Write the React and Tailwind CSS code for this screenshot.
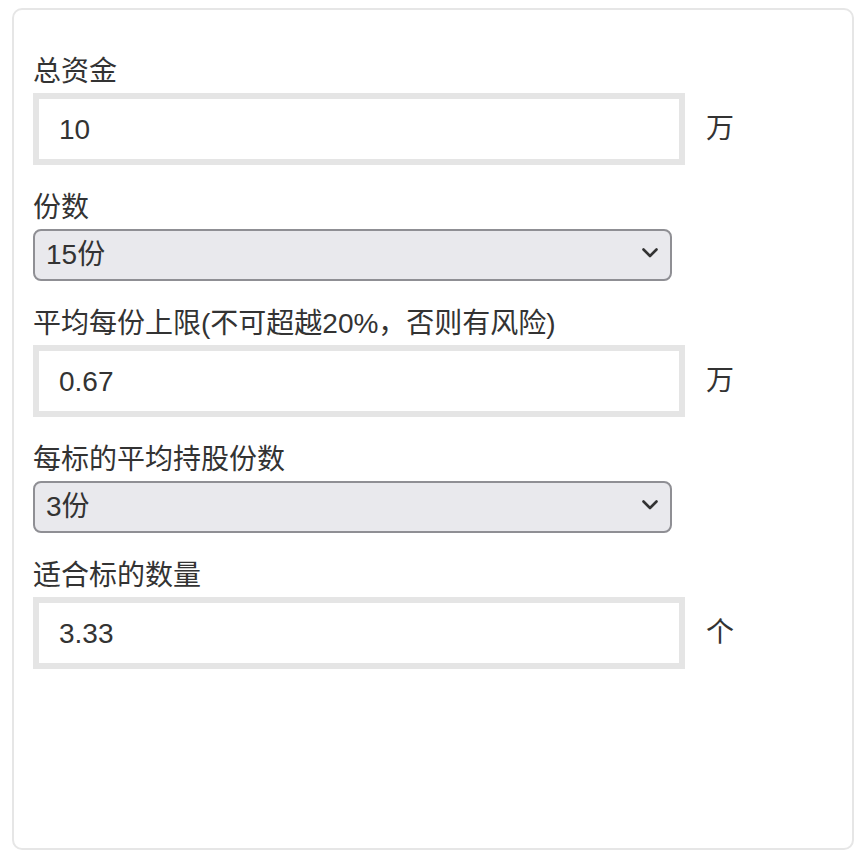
import React, { useState } from 'react'

const font = { fontFamily: '"Liberation Sans", "Noto Sans CJK SC", sans-serif' }

function Label({ children }) {
  return <div className="h-[40px] leading-[44px] text-[28px] text-[#333] mb-[3px] whitespace-nowrap">{children}</div>
}

function NumberField({ label, value, unit }) {
  return (
    <div>
      <Label>{label}</Label>
      <div className="flex items-center">
        <input
          type="text"
          defaultValue={value}
          className="w-[652px] h-[72px] border-[6px] border-[#e5e5e5] bg-white pl-[20px] pt-[2px] text-[28px] text-[#333] outline-none"
          style={font}
        />
        <span className="ml-[21px] text-[28px] text-[#333] leading-none">{unit}</span>
      </div>
    </div>
  )
}

function SelectField({ label, value, options }) {
  return (
    <div>
      <Label>{label}</Label>
      <div className="relative w-[639px] h-[52px]">
        <select
          defaultValue={value}
          className="appearance-none w-full h-full rounded-[8px] border-2 border-[#8f8f94] bg-[#e9e9ed] pl-[11px] text-[28px] text-[#333] outline-none"
          style={font}
        >
          {options.map((o) => (
            <option key={o} value={o}>{o}</option>
          ))}
        </select>
        <svg
          className="absolute right-[14px] top-[19px] pointer-events-none"
          width="16"
          height="10"
          viewBox="0 0 16 10"
          fill="none"
        >
          <path d="M1.5 1.5 L8 8 L14.5 1.5" stroke="#333" strokeWidth="2.6" strokeLinecap="round" strokeLinejoin="round" />
        </svg>
      </div>
    </div>
  )
}

export default function App() {
  const [shares] = useState(['10份', '15份', '20份'])
  return (
    <div className="w-[866px] h-[866px] bg-white pt-[8px] pl-[12px]" style={font}>
      <div className="w-[842px] h-[842px] rounded-[10px] border-2 border-[#e6e6e6] bg-white pl-[19px] pt-[40px] flex flex-col gap-[21px]">
        <NumberField label="总资金" value="10" unit="万" />
        <SelectField label="份数" value="15份" options={shares} />
        <NumberField label="平均每份上限(不可超越20%，否则有风险)" value="0.67" unit="万" />
        <SelectField label="每标的平均持股份数" value="3份" options={['1份', '2份', '3份', '4份', '5份']} />
        <NumberField label="适合标的数量" value="3.33" unit="个" />
      </div>
    </div>
  )
}
